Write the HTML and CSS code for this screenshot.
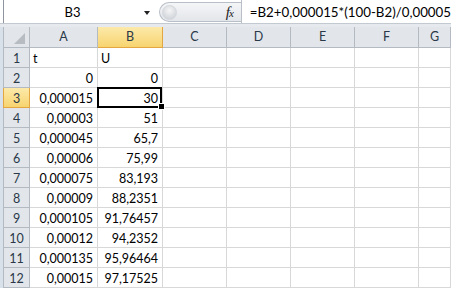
FILE: index.html
```html
<!DOCTYPE html>
<html>
  <head>
    <title>Book1</title>
    <link rel="stylesheet" href="styles.css">
  </head>

  <body>
    <main class="app">
      <div class="formula-bar">
        <div class="name-box">
          <span class="name">B3</span>
          <span class="drop"></span>
        </div>
        <div class="fx-pill">
          <span class="knob"></span>
          <span class="fx">f<span class="fx-x">x</span></span>
        </div>
        <div class="formula">=B2+0,000015*(100-B2)/0,00005</div>
      </div>
      <div class="band"></div>
      <div class="sheet">
        <div class="strip"></div>
        <div class="grid">
          <div class="corner"><span class="tri"></span></div>
          <div class="col-head">A</div>
          <div class="col-head selected">B</div>
          <div class="col-head">C</div>
          <div class="col-head">D</div>
          <div class="col-head">E</div>
          <div class="col-head">F</div>
          <div class="col-head">G</div>

          <div class="row-head">1</div>
          <div class="cell text">t</div><div class="cell text">U</div>
          <div class="cell"></div><div class="cell"></div><div class="cell"></div><div class="cell"></div><div class="cell"></div>

          <div class="row-head">2</div>
          <div class="cell">0</div><div class="cell">0</div>
          <div class="cell"></div><div class="cell"></div><div class="cell"></div><div class="cell"></div><div class="cell"></div>

          <div class="row-head selected">3</div>
          <div class="cell">0,000015</div><div class="cell active">30<span class="handle"></span></div>
          <div class="cell"></div><div class="cell"></div><div class="cell"></div><div class="cell"></div><div class="cell"></div>

          <div class="row-head">4</div>
          <div class="cell">0,00003</div><div class="cell">51</div>
          <div class="cell"></div><div class="cell"></div><div class="cell"></div><div class="cell"></div><div class="cell"></div>

          <div class="row-head">5</div>
          <div class="cell">0,000045</div><div class="cell">65,7</div>
          <div class="cell"></div><div class="cell"></div><div class="cell"></div><div class="cell"></div><div class="cell"></div>

          <div class="row-head">6</div>
          <div class="cell">0,00006</div><div class="cell">75,99</div>
          <div class="cell"></div><div class="cell"></div><div class="cell"></div><div class="cell"></div><div class="cell"></div>

          <div class="row-head">7</div>
          <div class="cell">0,000075</div><div class="cell">83,193</div>
          <div class="cell"></div><div class="cell"></div><div class="cell"></div><div class="cell"></div><div class="cell"></div>

          <div class="row-head">8</div>
          <div class="cell">0,00009</div><div class="cell">88,2351</div>
          <div class="cell"></div><div class="cell"></div><div class="cell"></div><div class="cell"></div><div class="cell"></div>

          <div class="row-head">9</div>
          <div class="cell">0,000105</div><div class="cell">91,76457</div>
          <div class="cell"></div><div class="cell"></div><div class="cell"></div><div class="cell"></div><div class="cell"></div>

          <div class="row-head">10</div>
          <div class="cell">0,00012</div><div class="cell">94,2352</div>
          <div class="cell"></div><div class="cell"></div><div class="cell"></div><div class="cell"></div><div class="cell"></div>

          <div class="row-head">11</div>
          <div class="cell">0,000135</div><div class="cell">95,96464</div>
          <div class="cell"></div><div class="cell"></div><div class="cell"></div><div class="cell"></div><div class="cell"></div>

          <div class="row-head">12</div>
          <div class="cell">0,00015</div><div class="cell">97,17525</div>
          <div class="cell"></div><div class="cell"></div><div class="cell"></div><div class="cell"></div><div class="cell"></div>
        </div>
      </div>
    </main>
  </body>
</html>
```

FILE: styles.css
```css
body {
  margin: 0;
  background: white;
  font-family: Lato, "Open Sans", sans-serif;
  font-size: 12.5px;
  color: black;
}
.app {
  width: 451px;
  height: 288px;
  overflow: hidden;
  display: flex;
  flex-direction: column;
}

/* formula bar */
.formula-bar {
  height: 23px;
  display: flex;
  padding-left: 3px;
  border-bottom: 1px solid #c3c9d0;
}
.name-box {
  width: 156px;
  display: flex;
  border-left: 1px solid #8f959c;
}
.name {
  flex: 1;
  text-align: center;
  line-height: 24px;
  font-size: 13px;
}
.drop {
  width: 14px;
  position: relative;
}
.drop::after {
  content: "";
  position: absolute;
  left: 3px;
  top: 11px;
  border-left: 3px solid transparent;
  border-right: 3px solid transparent;
  border-top: 4px solid #222;
}
.fx-pill {
  width: 84px;
  margin: 2px 0 1px 4px;
  display: flex;
  align-items: center;
  justify-content: space-between;
  padding: 0 8px 0 2px;
  box-sizing: border-box;
  border: 1px solid #b9bfc7;
  border-right: 0;
  border-radius: 10px 0 0 10px;
  background: linear-gradient(#f4f5f7, #e3e6ea);
}
.knob {
  width: 13px;
  height: 13px;
  border-radius: 50%;
  background: radial-gradient(circle at 50% 35%, #f4f5f6, #c8ccd1);
  border: 1px solid #d3d7dc;
}
.fx {
  font-family: "Liberation Serif", serif;
  font-style: italic;
  font-size: 15px;
  color: #222;
  letter-spacing: -1px;
}
.fx-x {
  font-size: 11px;
}
.formula {
  flex: 1;
  border-left: 1px solid #b9bfc7;
  padding-left: 8px;
  line-height: 25px;
  font-size: 13.3px;
  white-space: nowrap;
}
.band {
  height: 3px;
  background: #e6eaef;
}

/* sheet */
.sheet {
  flex: 1;
  display: flex;
}
.strip {
  width: 3px;
  background: #d8e0ea;
}
.grid {
  flex: 1;
  display: grid;
  grid-template-columns: 27px 68px 65px 64px 64px 64px 64px 1fr;
  grid-template-rows: 21px;
  grid-auto-rows: 20px;
}
.corner,
.col-head,
.row-head {
  background: #e2e6eb;
  color: #2a3848;
  box-sizing: border-box;
  border-right: 1px solid #b4bac1;
  border-bottom: 1px solid #b4bac1;
}
.corner {
  border-left: 1px solid #b4bac1;
  position: relative;
}
.tri {
  position: absolute;
  right: 4px;
  bottom: 3px;
  width: 11px;
  height: 11px;
  background: #b7bcc2;
  clip-path: polygon(100% 0, 100% 100%, 0 100%);
}
.col-head {
  text-align: center;
  line-height: 20px;
}
.row-head {
  border-left: 1px solid #b4bac1;
  text-align: center;
  padding-top: 2px;
  line-height: 17px;
}
.col-head.selected,
.row-head.selected {
  background: linear-gradient(#fce9aa, #f7d46f);
  border-color: #e3a640;
}
.cell {
  box-sizing: border-box;
  border-right: 1px solid #d8d8d8;
  border-bottom: 1px solid #d8d8d8;
  padding: 2px 4px 0 3px;
  line-height: 17px;
  text-align: right;
  white-space: nowrap;
}
.cell.text {
  text-align: left;
}
.cell.active {
  position: relative;
}
.cell.active::before {
  content: "";
  position: absolute;
  left: -1px;
  top: -1px;
  right: 0;
  bottom: -1px;
  border: 2px solid black;
}
.handle {
  position: absolute;
  right: -3px;
  bottom: -3px;
  width: 5px;
  height: 5px;
  background: black;
  border: 1px solid white;
}
```
